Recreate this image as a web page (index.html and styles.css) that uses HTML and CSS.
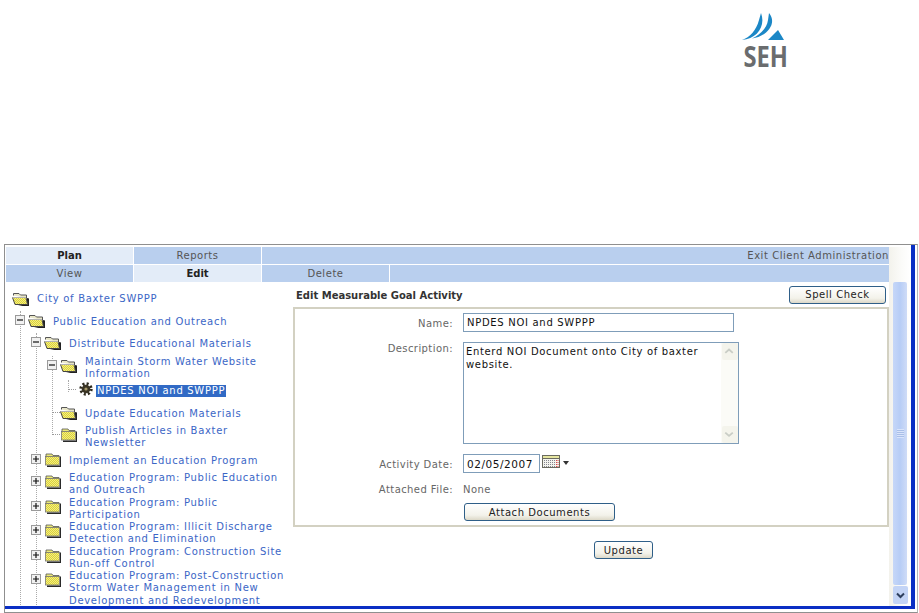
FILE: index.html
```html
<!DOCTYPE html>
<html lang="en">
<head>
<meta charset="utf-8">
<title>Edit Measurable Goal Activity</title>
<link rel="stylesheet" href="styles.css">
</head>
<body>
<svg class="defs" width="0" height="0" aria-hidden="true">
  <defs>
    <pattern id="dither" width="2" height="2" patternUnits="userSpaceOnUse">
      <rect width="2" height="2" fill="#f6ef7c"/>
      <rect width="1" height="1" fill="#d8d040"/>
      <rect x="1" y="1" width="1" height="1" fill="#d8d040"/>
    </pattern>
    <symbol id="folder-open" viewBox="0 0 17 14">
      <path d="M1.5 3.5 V1.5 H7 L8.500 3 H14.500 V6" fill="#e8e6c8" stroke="#555"/>
      <path d="M15 6 L17 6.500 V14 H6 L15 12 Z" fill="#222"/>
      <path d="M.5 5.500 H14 L15.500 12.500 H3 Z" fill="url(#dither)" stroke="#444"/>
      <path d="M.5 5.500 H14" stroke="#fff" stroke-width=".6"/>
    </symbol>
    <symbol id="folder" viewBox="0 0 17 14">
      <path d="M2 1 H8 L9 2.500 H15 V4 H2 Z" fill="#ece97a" stroke="#555" stroke-width=".8"/>
      <rect x="1.500" y="3.500" width="14" height="8.500" fill="url(#dither)" stroke="#777" stroke-width=".8"/>
      <path d="M16 3.500 H17 V14 H3 V12.500 H16 Z" fill="#2a2a2a"/>
    </symbol>
    <symbol id="minus" viewBox="0 0 10 10">
      <rect x=".5" y=".5" width="9" height="9" fill="#f1f1f1" stroke="#9a9a9a"/>
      <path d="M2 5 H8" stroke="#111" stroke-width="1.200"/>
    </symbol>
    <symbol id="plus" viewBox="0 0 10 10">
      <rect x=".5" y=".5" width="9" height="9" fill="#f1f1f1" stroke="#9a9a9a"/>
      <path d="M2 5 H8 M5 2 V8" stroke="#111" stroke-width="1.200"/>
    </symbol>
  </defs>
</svg>

<header class="page-header">
  <svg class="logo" viewBox="735 10 70 62" width="70" height="62" role="img" aria-label="SEH">
    <path d="M742 40 C750 37 756 31 759 20 L761 13 C766 26 757 39 742 40 Z" fill="#1b87c6"/>
    <path d="M752 38.500 C760 35 767 28 768 20 L769 13 C778 24 766 37 752 38.500 Z" fill="#1b87c6"/>
    <path d="M768 40 L778 30 L784 40 Z" fill="#1b87c6"/>
    <text class="logo-text" x="743.500" y="67" textLength="44.500" lengthAdjust="spacingAndGlyphs">SEH</text>
  </svg>
</header>

<div class="window">
  <div class="window-body">
    <main class="main">
      <nav class="tabs">
        <div class="tab-row">
          <a class="tab active">Plan</a>
          <a class="tab">Reports</a>
          <a class="tab fill">Exit Client Administration</a>
        </div>
        <div class="tab-row">
          <a class="tab">View</a>
          <a class="tab active">Edit</a>
          <a class="tab">Delete</a>
          <span class="tab fill"></span>
        </div>
      </nav>

      <div class="content">
        <aside class="tree">
          <div class="row root">
            <svg class="ico"><use href="#folder-open"/></svg>
            <a class="label">City of Baxter SWPPP</a>
          </div>
          <ul class="nodes level1">
            <li>
              <div class="row">
                <svg class="tog"><use href="#minus"/></svg>
                <svg class="ico"><use href="#folder-open"/></svg>
                <a class="label">Public Education and Outreach</a>
              </div>
              <ul class="nodes level2">
                <li>
                  <div class="row">
                    <svg class="tog"><use href="#minus"/></svg>
                    <svg class="ico"><use href="#folder-open"/></svg>
                    <a class="label">Distribute Educational Materials</a>
                  </div>
                  <ul class="nodes level3">
                    <li>
                      <div class="row">
                        <svg class="tog"><use href="#minus"/></svg>
                        <svg class="ico"><use href="#folder-open"/></svg>
                        <a class="label">Maintain Storm Water Website Information</a>
                      </div>
                      <ul class="nodes level4">
                        <li>
                          <div class="row">
                            <span class="stub"></span>
                            <svg class="gear" viewBox="0 0 14 14">
                              <circle cx="7" cy="7" r="5.200" fill="none" stroke="#2e2a1e" stroke-width="3" stroke-dasharray="2 2.080"/>
                              <circle cx="7" cy="7" r="4.300" fill="#3a3424"/>
                              <circle cx="7" cy="7" r="1.600" fill="#a89a6a"/>
                            </svg>
                            <a class="label"><span class="selected">NPDES NOI and SWPPP</span></a>
                          </div>
                        </li>
                      </ul>
                    </li>
                    <li>
                      <div class="row">
                        <span class="stub"></span>
                        <svg class="ico"><use href="#folder-open"/></svg>
                        <a class="label">Update Education Materials</a>
                      </div>
                    </li>
                    <li>
                      <div class="row">
                        <span class="stub"></span>
                        <svg class="ico"><use href="#folder"/></svg>
                        <a class="label">Publish Articles in Baxter Newsletter</a>
                      </div>
                    </li>
                  </ul>
                </li>
                <li>
                  <div class="row">
                    <svg class="tog"><use href="#plus"/></svg>
                    <svg class="ico"><use href="#folder"/></svg>
                    <a class="label">Implement an Education Program</a>
                  </div>
                </li>
                <li>
                  <div class="row">
                    <svg class="tog"><use href="#plus"/></svg>
                    <svg class="ico"><use href="#folder"/></svg>
                    <a class="label">Education Program: Public Education and Outreach</a>
                  </div>
                </li>
                <li>
                  <div class="row">
                    <svg class="tog"><use href="#plus"/></svg>
                    <svg class="ico"><use href="#folder"/></svg>
                    <a class="label">Education Program: Public Participation</a>
                  </div>
                </li>
                <li>
                  <div class="row">
                    <svg class="tog"><use href="#plus"/></svg>
                    <svg class="ico"><use href="#folder"/></svg>
                    <a class="label">Education Program: Illicit Discharge Detection and Elimination</a>
                  </div>
                </li>
                <li>
                  <div class="row">
                    <svg class="tog"><use href="#plus"/></svg>
                    <svg class="ico"><use href="#folder"/></svg>
                    <a class="label">Education Program: Construction Site Run-off Control</a>
                  </div>
                </li>
                <li>
                  <div class="row">
                    <svg class="tog"><use href="#plus"/></svg>
                    <svg class="ico"><use href="#folder"/></svg>
                    <a class="label">Education Program: Post-Construction Storm Water Management in New Development and Redevelopment</a>
                  </div>
                </li>
              </ul>
            </li>
          </ul>
        </aside>

        <section class="pane">
          <div class="pane-head">
            <h1 class="pane-title">Edit Measurable Goal Activity</h1>
            <button class="btn spell" type="button">Spell Check</button>
          </div>
          <form class="box">
            <label class="field-label tall" for="name">Name:</label>
            <input class="input name" id="name" type="text" value="NPDES NOI and SWPPP">

            <label class="field-label" for="desc">Description:</label>
            <div class="textarea">
              <textarea class="textarea-input" id="desc">Enterd NOI Document onto City of baxter website.</textarea>
              <div class="ta-scroll">
                <span class="ta-btn"><svg viewBox="0 0 16 16" width="15" height="16"><path d="M3.500 10 L7.500 6.500 L11.500 10" fill="none" stroke="#c9cdc6" stroke-width="2"/></svg></span>
                <span class="ta-btn"><svg viewBox="0 0 16 16" width="15" height="16"><path d="M3.500 6.500 L7.500 10 L11.500 6.500" fill="none" stroke="#c9cdc6" stroke-width="2"/></svg></span>
              </div>
            </div>

            <label class="field-label tall" for="date">Activity Date:</label>
            <div class="date-field">
              <input class="input date" id="date" type="text" value="02/05/2007">
              <svg class="cal" viewBox="0 0 18 13" width="18" height="13">
                <rect x=".5" y=".5" width="17" height="12" fill="#f4f4ee" stroke="#6b6b60"/>
                <rect x="1" y="1" width="16" height="2" fill="#e6e6a0"/>
                <rect x="1" y="3" width="16" height="1" fill="#6b6b60"/>
                <path d="M2 5.500 H14 M2 7.500 H14 M2 9.500 H14 M2 11.500 H14" stroke="#85858f" stroke-dasharray="1 1"/>
                <path d="M14.500 5 V12 M16 5 V12" stroke="#d8484a" stroke-dasharray="1 1"/>
              </svg>
              <svg class="caret" viewBox="0 0 6 4" width="6" height="4"><path d="M0 0 H6 L3 4 Z" fill="#333"/></svg>
            </div>

            <span class="field-label attached">Attached File:</span>
            <span class="value attached">None</span>

            <span></span>
            <div class="attach-cell"><button class="btn attach" type="button">Attach Documents</button></div>
          </form>
          <div class="actions">
            <button class="btn update" type="button">Update</button>
          </div>
        </section>
      </div>
    </main>

    <div class="scrollbar">
      <div class="thumb"><span class="grip"></span></div>
      <div class="down">
        <svg viewBox="0 0 15 18" width="15" height="18"><path d="M4 7.500 L7.500 11 L11 7.500" fill="none" stroke="#2d3f5e" stroke-width="2"/></svg>
      </div>
    </div>
  </div>
</div>
</body>
</html>
```

FILE: styles.css
```css
* { box-sizing: border-box; }

html, body {
  margin: 0;
  height: 613px;
  overflow: hidden;
  background: #fff;
  font-family: "DejaVu Sans", Verdana, sans-serif;
  font-size: 10px;
  color: #555;
}

.defs { position: absolute; }

.page-header {
  height: 244px;
  display: flex;
  justify-content: flex-end;
  padding: 10px 114px 0 0;
}

.logo { display: block; }

.logo-text {
  font-family: "Open Sans", sans-serif;
  font-weight: 700;
  font-size: 28px;
  fill: #6a6c6e;
}

.window {
  height: 369px;
  margin: 0 1px 0 4px;
  padding-bottom: 3px;
  border: 1px solid #8f8f8f;
  border-right-color: #b5b5b5;
}

.window-body {
  height: 100%;
  margin-right: 2px;
  padding: 2px 0 0 1px;
  display: flex;
  border-right: 4px solid #0a2fc4;
  border-bottom: 3px solid #0a2fc4;
  overflow: hidden;
}

.main {
  width: 883px;
  display: flex;
  flex-direction: column;
  min-height: 0;
}

.tabs {
  display: flex;
  flex-direction: column;
  gap: 1px;
}

.tab-row {
  display: flex;
  gap: 1px;
  height: 17px;
}

.tab {
  width: 127px;
  flex: none;
  background: #b9cfee;
  color: #555;
  line-height: 17px;
  text-align: center;
  letter-spacing: .55px;
}

.tab.active {
  background: #e3ecf8;
  color: #222;
  font-weight: 700;
  letter-spacing: 0;
}

.tab.fill {
  flex: 1;
  text-align: right;
}

.content {
  flex: 1;
  min-height: 0;
  display: flex;
}

.tree {
  width: 287px;
  flex: none;
  padding: 6px 6px 0 6px;
  overflow: hidden;
}

.nodes {
  position: relative;
  list-style: none;
  margin: 0 0 0 16px;
  padding: 0;
}

.nodes::before {
  content: "";
  position: absolute;
  left: 5px;
  top: 0;
  bottom: -30px;
  border-left: 1px dotted #aaa;
}

.level1 { margin-left: 3px; }
.level3::before { bottom: 17px; }
.level4::before { bottom: 11px; }

.row {
  position: relative;
  display: flex;
  align-items: flex-start;
  min-height: 22.500px;
}

.tog {
  width: 10px;
  height: 10px;
  margin: 4px 3px 0 0;
  flex: none;
}

.stub {
  width: 8px;
  height: 0;
  margin: 9px 0 0 5px;
  border-top: 1px dotted #999;
  flex: none;
}

.ico {
  width: 17px;
  height: 14px;
  margin: 3px 8px 0 0;
  flex: none;
}

.root .ico { margin-top: 4px; }

.gear {
  width: 14px;
  height: 14px;
  margin: 2px 3px 0 3px;
  flex: none;
}

.label {
  align-self: center;
  color: #3b66c6;
  line-height: 12.250px;
  letter-spacing: .7px;
  min-width: 0;
}

.selected {
  display: inline-block;
  padding: 0 1px;
  background: #316ac5;
  color: #fff;
  line-height: 12px;
}

.pane {
  flex: 1;
  min-width: 0;
  display: flex;
  flex-direction: column;
}

.pane-head {
  display: flex;
  justify-content: space-between;
  align-items: center;
  height: 25px;
  padding: 4px 3px;
}

.pane-title {
  margin: 0;
  padding-top: 2px;
  font-size: 10px;
  font-weight: 700;
  color: #333;
}

.btn {
  height: 18px;
  padding: 0;
  border: 1px solid #2f5f88;
  border-radius: 3px;
  background: linear-gradient(#fff, #f3f2ea 70%, #dcd8c8);
  font-family: inherit;
  font-size: 10px;
  color: #222;
  letter-spacing: .55px;
}

.spell { width: 97px; }
.attach { width: 151px; }
.update { width: 59px; }

.box {
  display: grid;
  grid-template-columns: 158px 1fr;
  column-gap: 10px;
  row-gap: 10px;
  align-items: start;
  padding: 4px 0;
  border: 2px solid #d3d1c2;
}

.field-label {
  padding-top: 1px;
  text-align: right;
  line-height: 12px;
  color: #666;
  letter-spacing: .42px;
}

.field-label.tall {
  height: 19px;
  line-height: 19px;
}

.value {
  padding-top: 1px;
  color: #666;
  line-height: 12px;
  letter-spacing: .45px;
}

.field-label.attached,
.value.attached {
  height: 10px;
  line-height: 12px;
}

.input {
  display: block;
  height: 19px;
  padding: 0 3px;
  border: 1px solid #7f9db9;
  border-radius: 0;
  font-family: inherit;
  font-size: 10px;
  color: #111;
  outline: 0;
}

.input.name { width: 271px; letter-spacing: .7px; }
.input.date { width: 77px; font-size: 10.500px; letter-spacing: .55px; }

.textarea {
  display: flex;
  width: 276px;
  height: 102px;
  border: 1px solid #7f9db9;
}

.textarea-input {
  flex: 1;
  min-width: 0;
  height: 100%;
  padding: 3px 2px;
  border: 0;
  resize: none;
  overflow: hidden;
  outline: 0;
  font-family: inherit;
  font-size: 10px;
  line-height: 12.500px;
  color: #111;
  letter-spacing: .66px;
}

.ta-scroll {
  width: 17px;
  flex: none;
  padding-left: 1px;
  display: flex;
  flex-direction: column;
  justify-content: space-between;
  background: #fbfbf7;
}

.ta-btn {
  display: block;
  height: 17px;
  background: #f4f4ec;
  border-radius: 2px;
}

.ta-btn svg { display: block; }

.date-field {
  display: flex;
  align-items: flex-start;
}

.cal { margin: 1px 0 0 2px; }
.caret { margin: 7px 0 0 3px; }

.attach-cell { padding-left: 1px; }

.actions {
  margin-top: 14px;
  padding-left: 301px;
}

.scrollbar {
  width: 21px;
  flex: none;
  padding: 35px 1px 2px 4px;
  display: flex;
  flex-direction: column;
  gap: 1px;
  background: linear-gradient(90deg, #f3f2ec, #fbfbf9 60%, #fff);
}

.thumb {
  flex: 1;
  display: flex;
  align-items: center;
  justify-content: center;
  width: 14px;
  background: linear-gradient(90deg, #c6d7f8, #b7cdf6 50%, #cfdcf7);
  border-radius: 2px;
}

.grip {
  width: 7px;
  height: 9px;
  background: repeating-linear-gradient(#d9e4fb 0 1px, #a9bfe8 1px 2px);
}

.down {
  width: 15px;
  height: 18px;
  background: #c3d4f6;
  border-radius: 2px;
}

.down svg { display: block; }
```
